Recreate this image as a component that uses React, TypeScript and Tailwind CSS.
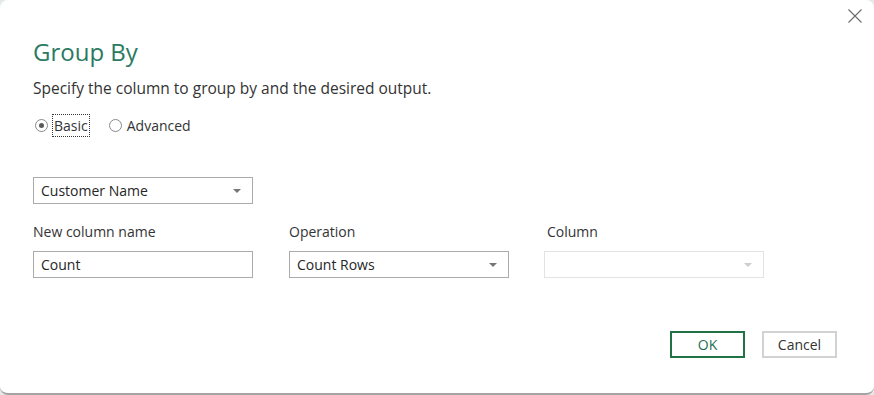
import React from 'react';

const font = { fontFamily: '"Segoe UI", "Open Sans", "Noto Sans", sans-serif' };

const Caret = ({ disabled }: { disabled?: boolean }) => (
  <svg width="8" height="4" viewBox="0 0 8 4" className="shrink-0">
    <path d="M0 0 L8 0 L4 4 Z" fill={disabled ? '#cdcdcd' : '#767676'} />
  </svg>
);

const Dropdown = ({ value, disabled }: { value?: string; disabled?: boolean }) => (
  <div
    className={`flex items-center justify-between w-[220px] h-[27px] pl-[7px] pr-[11px] border ${
      disabled ? 'border-[#e3e3e3]' : 'border-[#ababab]'
    } bg-white text-[14px] text-[#262626]`}
  >
    <span>{value}</span>
    <Caret disabled={disabled} />
  </div>
);

const Field = ({ label, children, indent }: { label: string; children: React.ReactNode; indent?: boolean }) => (
  <div className="flex flex-col w-[220px]">
    <div className={`text-[14px] text-[#333] leading-[20px] h-[20px] ${indent ? 'pl-[3px]' : ''}`}>{label}</div>
    <div className="mt-[9px]">{children}</div>
  </div>
);

export default function App() {
  return (
    <div className="w-[874px] h-[395px] bg-[#e4ebe7]" style={font}>
      <div className="relative w-full h-full bg-white rounded-[8px] border-b-2 border-[#a4a4a4] flex flex-col pl-[33px]">
        {/* close */}
        <button className="absolute right-[12px] top-[9px] w-[14px] h-[14px]">
          <svg width="14" height="14" viewBox="0 0 14 14">
            <path d="M0.5 0.5 L13.5 13.5 M13.5 0.5 L0.5 13.5" stroke="#6b6b6b" strokeWidth="1.1" />
          </svg>
        </button>

        <h1 className="mt-[36px] text-[24px] leading-[32px] text-[#2b7a62] font-normal">Group By</h1>
        <p className="mt-[10px] text-[15.5px] leading-[20px] text-[#333]">
          Specify the column to group by and the desired output.
        </p>

        {/* radios */}
        <div className="flex items-center mt-[16px] text-[14px] text-[#333]">
          <div className="flex items-center ml-[2px]">
            <span className="w-[13px] h-[13px] rounded-full border border-[#8a8a8a] flex items-center justify-center">
              <span className="w-[5px] h-[5px] rounded-full bg-[#5a5a5a]" />
            </span>
            <span className="ml-[4px] px-[1px] leading-[21px] border border-dotted border-[#333]">Basic</span>
          </div>
          <div className="flex items-center ml-[19px]">
            <span className="w-[13px] h-[13px] rounded-full border border-[#8a8a8a]" />
            <span className="ml-[5px] leading-[21px]">Advanced</span>
          </div>
        </div>

        <div className="mt-[40px]">
          <Dropdown value="Customer Name" />
        </div>

        <div className="flex mt-[18px]">
          <Field label="New column name">
            <div className="w-[220px] h-[27px] pl-[7px] flex items-center border border-[#ababab] text-[14px] text-[#262626]">
              Count
            </div>
          </Field>
          <div className="ml-[36px]">
            <Field label="Operation">
              <Dropdown value="Count Rows" />
            </Field>
          </div>
          <div className="ml-[35px]">
            <Field label="Column" indent>
              <Dropdown disabled />
            </Field>
          </div>
        </div>

        <div className="flex justify-end mt-[53px] pr-[37px] gap-[17px]">
          <button className="w-[75px] h-[27px] border-2 border-[#217346] text-[14px] text-[#1f6f52]">OK</button>
          <button className="w-[75px] h-[27px] border-2 border-[#d2d2d2] text-[14px] text-[#333]">Cancel</button>
        </div>
      </div>
    </div>
  );
}
